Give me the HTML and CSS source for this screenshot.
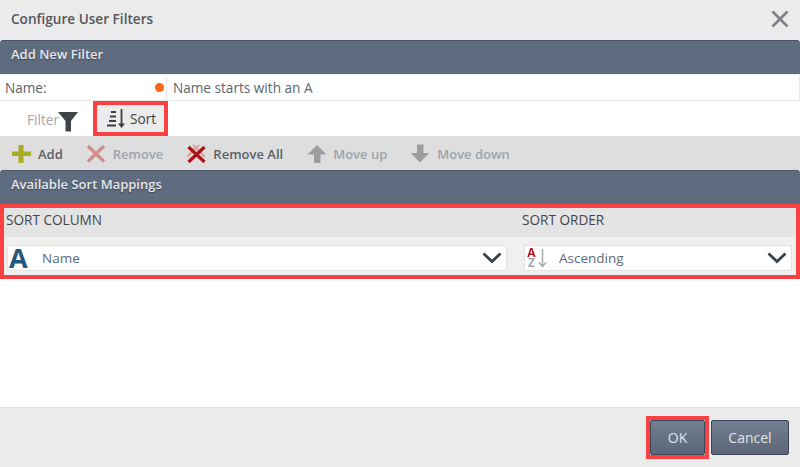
FILE: index.html
```html
<!DOCTYPE html>
<html lang="en">
<head>
<meta charset="utf-8">
<title>Configure User Filters</title>
<link rel="stylesheet" href="styles.css">
</head>
<body>
<div class="dialog">
  <div class="title-bar">
    <span class="title">Configure User Filters</span>
    <svg class="close" width="20" height="20" viewBox="0 0 20 20"><path d="M2.500 2.500L17.500 17.500M17.500 2.500L2.500 17.500" stroke="#7f8389" stroke-width="2.800" fill="none"/></svg>
  </div>
  <div class="band">Add New Filter</div>
  <div class="name-row">
    <div class="name-label"><span>Name:</span><i class="dot"></i></div>
    <div class="name-value">Name starts with an A</div>
  </div>
  <div class="tabs">
    <div class="tab-filter">
      <span>Filter</span>
      <svg width="20" height="21" viewBox="0 0 20 21"><path d="M0 1H20L13 10V20.500H7.500V10Z" fill="#3f4446"/></svg>
    </div>
    <div class="tab-sort">
      <svg width="20" height="21" viewBox="0 0 20 21"><path d="M4 3H9V5H4ZM3 7.500H9V9.500H3ZM2 12H9V14H2ZM0 16.500H9V18.500H0Z" fill="#3b4043"/><path d="M14.500 1V18" stroke="#3b4043" stroke-width="1.800" fill="none"/><path d="M11 15.500H18L14.500 20Z" fill="#3b4043"/></svg>
      <span>Sort</span>
    </div>
  </div>
  <div class="toolbar">
    <div class="tool">
      <svg width="20" height="20" viewBox="0 0 20 20"><path d="M6.500 1H11.500V7.500H19V12H11.500V19H6.500V12H0V7.500H6.500Z" fill="#a9ac27"/></svg>
      <span>Add</span>
    </div>
    <div class="tool off">
      <svg width="20" height="20" viewBox="0 0 20 20"><path d="M1 2L17 17.500M17 2L1 17.500" stroke="#d08d8b" stroke-width="3.400" fill="none"/></svg>
      <span>Remove</span>
    </div>
    <div class="tool">
      <svg width="20" height="20" viewBox="0 0 20 20"><path d="M6 1L18 13M12 1L0 13" stroke="#d9a3a1" stroke-width="2" fill="none"/><path d="M1.500 3L17.500 18M17.500 3L1.500 18" stroke="#ae1218" stroke-width="3.200" fill="none"/></svg>
      <span>Remove All</span>
    </div>
    <div class="tool off">
      <svg width="20" height="20" viewBox="0 0 20 20"><path d="M10 1L19.500 10.500H13.500V19H7V10.500H0.500Z" fill="#9a9c9d"/></svg>
      <span>Move up</span>
    </div>
    <div class="tool off">
      <svg width="20" height="20" viewBox="0 0 20 20"><path d="M9 18.500L18 9H12.500V0.500H6V9H0Z" fill="#9a9c9d"/></svg>
      <span>Move down</span>
    </div>
  </div>
  <div class="band">Available Sort Mappings</div>
  <div class="mappings">
    <div class="map-head">
      <div class="col-a">SORT COLUMN</div>
      <div class="col-b">SORT ORDER</div>
    </div>
    <div class="map-row">
      <div class="select sel-a">
        <span class="big-a">A</span>
        <span class="sel-text">Name</span>
        <svg class="chev" width="20" height="12" viewBox="0 0 20 12"><path d="M1.500 1.500L10 9.500L18.500 1.500" stroke="#37444a" stroke-width="2.800" fill="none"/></svg>
      </div>
      <div class="select sel-b">
        <span class="az">A<br>Z</span>
        <svg class="az-arrow" width="9" height="20" viewBox="0 0 9 20"><path d="M4.500 1V18M1 14.500L4.500 18.500L8 14.500" stroke="#a3a6a8" stroke-width="1.400" fill="none"/></svg>
        <span class="sel-text">Ascending</span>
        <svg class="chev" width="20" height="12" viewBox="0 0 20 12"><path d="M1.500 1.500L10 9.500L18.500 1.500" stroke="#37444a" stroke-width="2.800" fill="none"/></svg>
      </div>
    </div>
  </div>
  <div class="blank"></div>
  <div class="footer">
    <div class="ok-mark"><button class="btn btn-ok">OK</button></div>
    <button class="btn btn-cancel">Cancel</button>
  </div>
</div>
</body>
</html>
```

FILE: styles.css
```css
* { box-sizing: border-box; }
html, body { margin: 0; padding: 0; }
body {
  width: 800px;
  height: 467px;
  overflow: hidden;
  font-family: "Open Sans", sans-serif;
  font-size: 13.600px;
  color: #4a4f55;
  background: #fff;
}
.dialog { display: flex; flex-direction: column; height: 467px; }
.title-bar {
  height: 40px;
  flex: none;
  display: flex;
  align-items: center;
  justify-content: space-between;
  padding: 0 10px 3px 11px;
  background: #ebebeb;
}
.title { font-size: 13.600px; font-weight: 600; color: #55585c; }
.band {
  height: 34px;
  flex: none;
  display: flex;
  align-items: center;
  padding: 0 0 7px 11px;
  font-size: 13px;
  font-weight: 600;
  color: #e6e8ea;
  background: #5f6b7e;
  border-top: 1px solid #49566a;
  border-radius: 3px 3px 0 0;
  text-shadow: 0 1px 1px #3c4656;
}
.name-row {
  height: 27px;
  flex: none;
  display: flex;
  background: #fff;
  border-bottom: 1px solid #e6e6e6;
  border-top: 1px solid #eee;
}
.name-label {
  width: 166px;
  display: flex;
  align-items: center;
  justify-content: space-between;
  padding: 0 2px 0 5px;
  color: #5a6068;
}
.dot { width: 9px; height: 9px; border-radius: 50%; background: #fb6515; }
.name-value {
  flex: 1;
  padding: 3px 0 0 6px;
  border-left: 1px solid #e6e6e6;
  border-right: 1px solid #e6e6e6;
  color: #5b6570;
}
.tabs { height: 35px; flex: none; display: flex; background: #fff; }
.tab-filter {
  width: 93px;
  display: flex;
  align-items: center;
  justify-content: flex-end;
  padding: 2px 15px 0 0;
  color: #a4a6a8;
}
.tab-filter span { margin-right: -1px; }
.tab-filter svg { margin-top: 4px; }
.tab-sort {
  width: 75px;
  display: flex;
  align-items: center;
  gap: 3px;
  padding: 0 0 0 10px;
  border: 4px solid #fb4141;
  background: #ebebeb;
  color: #3f4448;
}
.toolbar {
  height: 34px;
  flex: none;
  display: flex;
  align-items: center;
  gap: 24px;
  padding: 1px 0 0 12px;
  background: #dedede;
  font-weight: 600;
  font-size: 13px;
  color: #59606b;
}
.tool { display: flex; align-items: center; gap: 6px; }
.tool.off { color: #9da4ae; }
.mappings { flex: none; height: 75px; border: 4px solid #fb4141; background: #f0f0f0; }
.map-head {
  height: 29px;
  display: flex;
  align-items: center;
  padding: 0 0 6px 2px;
  background: #e4e4e4;
  color: #43474b;
}
.col-a { width: 516px; }
.map-row { display: flex; padding: 8px 4px 0 3px; }
.select {
  height: 26px;
  display: flex;
  align-items: center;
  background: #fff;
  border: 1px solid #e2e2e2;
  border-radius: 2px;
  color: #5b6a7d;
  font-size: 13.500px;
}
.sel-a { width: 500px; margin-right: 17px; padding-left: 1px; }
.sel-b { width: 268px; padding-left: 1px; }
.big-a { width: 33px; font-size: 27px; font-weight: 700; line-height: 24px; color: #25587d; }
.az {
  width: 11px;
  font-size: 12px;
  font-weight: 700;
  line-height: 10px;
  text-align: center;
  color: transparent;
  background: linear-gradient(#b8121c 50%, #a3a6a8 50%);
  -webkit-background-clip: text;
  background-clip: text;
}
.az-arrow { margin: 0 12px 0 1px; }
.sel-text { flex: 1; }
.chev { margin-right: 4px; }
.blank { flex: 1; background: #fff; }
.footer {
  height: 60px;
  flex: none;
  display: flex;
  align-items: center;
  justify-content: flex-end;
  gap: 2px;
  padding: 0 11px 0 0;
  background: #ebebeb;
  border-top: 1px solid #e2e2e2;
}
.ok-mark { border: 4px solid #fb4141; display: flex; }
.btn {
  height: 35px;
  padding: 0;
  font-family: "Open Sans", sans-serif;
  font-size: 14px;
  color: #e1e4e7;
  background: linear-gradient(#737f90, #5b6778);
  border: 1px solid #39465a;
  border-radius: 2px;
}
.btn-ok { width: 55px; }
.btn-cancel { width: 78px; }
```
